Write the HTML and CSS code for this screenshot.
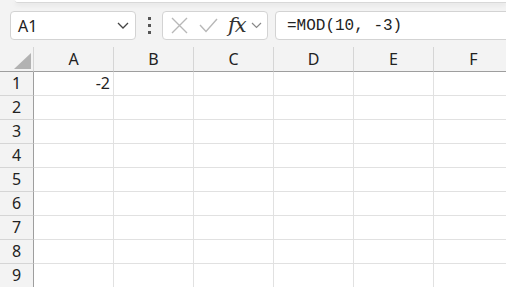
FILE: index.html
```html
<!DOCTYPE html>
<html lang="en">
<head>
    <meta charset="UTF-8">
    <title>MOD</title>
    <link rel="stylesheet" href="styles.css">
</head>
<body>
    <div class="ribbon-edge"></div>

    <div class="formula-bar">
        <div class="name-box">
            <span>A1</span>
            <svg class="chev" width="12" height="7" viewBox="0 0 12 7"><path d="M1 1 L6 6 L11 1" fill="none" stroke="#444" stroke-width="1.3"/></svg>
        </div>
        <div class="kebab"><i></i><i></i><i></i></div>
        <div class="fx-box">
            <svg width="17" height="17" viewBox="0 0 17 17"><path d="M1 1 L16 16 M16 1 L1 16" stroke="#b8b8b8" stroke-width="1.4" fill="none"/></svg>
            <svg width="19" height="15" viewBox="0 0 19 15"><path d="M1 7 L7 13.5 L18 1" stroke="#b8b8b8" stroke-width="1.4" fill="none"/></svg>
            <span class="fx">fx</span>
            <svg width="11" height="7" viewBox="0 0 11 7"><path d="M1 1 L5.5 5.5 L10 1" fill="none" stroke="#888" stroke-width="1.2"/></svg>
        </div>
        <div class="formula-input">=MOD(10, -3)</div>
    </div>

    <div class="sheet">
        <div class="corner"><span class="tri"></span></div>
        <div class="col-head">A</div>
        <div class="col-head">B</div>
        <div class="col-head">C</div>
        <div class="col-head">D</div>
        <div class="col-head">E</div>
        <div class="col-head">F</div>

        <div class="row-head">1</div>
        <div class="cell num">-2</div><div class="cell"></div><div class="cell"></div><div class="cell"></div><div class="cell"></div><div class="cell"></div>
        <div class="row-head">2</div>
        <div class="cell"></div><div class="cell"></div><div class="cell"></div><div class="cell"></div><div class="cell"></div><div class="cell"></div>
        <div class="row-head">3</div>
        <div class="cell"></div><div class="cell"></div><div class="cell"></div><div class="cell"></div><div class="cell"></div><div class="cell"></div>
        <div class="row-head">4</div>
        <div class="cell"></div><div class="cell"></div><div class="cell"></div><div class="cell"></div><div class="cell"></div><div class="cell"></div>
        <div class="row-head">5</div>
        <div class="cell"></div><div class="cell"></div><div class="cell"></div><div class="cell"></div><div class="cell"></div><div class="cell"></div>
        <div class="row-head">6</div>
        <div class="cell"></div><div class="cell"></div><div class="cell"></div><div class="cell"></div><div class="cell"></div><div class="cell"></div>
        <div class="row-head">7</div>
        <div class="cell"></div><div class="cell"></div><div class="cell"></div><div class="cell"></div><div class="cell"></div><div class="cell"></div>
        <div class="row-head">8</div>
        <div class="cell"></div><div class="cell"></div><div class="cell"></div><div class="cell"></div><div class="cell"></div><div class="cell"></div>
        <div class="row-head">9</div>
        <div class="cell"></div><div class="cell"></div><div class="cell"></div><div class="cell"></div><div class="cell"></div><div class="cell"></div>
    </div>
</body>
</html>
```

FILE: styles.css
```css
body {
    margin: 0;
    width: 506px;
    height: 287px;
    overflow: hidden;
    background-color: #f3f3f3;
    font-family: "Noto Sans", "Open Sans", sans-serif;
    color: #222;
}

.ribbon-edge {
    height: 2px;
    margin-left: 15px;
    background-color: #fff;
    border-bottom: 1px solid #d8d8d8;
    border-bottom-left-radius: 5px;
    box-shadow: 0 2px 5px rgba(0, 0, 0, 0.08);
}

.formula-bar {
    display: flex;
    align-items: center;
    padding: 8px 0 0 10px;
    height: 29px;
    margin-bottom: 7px;
}

.name-box,
.fx-box,
.formula-input {
    box-sizing: border-box;
    height: 29px;
    background-color: #fff;
    border: 1px solid #d3d3d3;
    border-radius: 4px;
    display: flex;
    align-items: center;
}

.name-box {
    width: 126px;
    padding: 0 6px 0 7px;
    justify-content: space-between;
    font-size: 16px;
}

.kebab {
    width: 26px;
    display: flex;
    flex-direction: column;
    align-items: center;
    gap: 4px;
}

.kebab i {
    width: 3px;
    height: 3px;
    background-color: #555;
}

.fx-box {
    width: 106px;
    padding: 0 3px 0 8px;
    gap: 11px;
}

.fx-box .fx {
    font-family: "DejaVu Serif", serif;
    font-style: italic;
    font-size: 21px;
    color: #333;
    margin-left: -1px;
    margin-right: -6px;
    letter-spacing: -1px;
    line-height: 1;
}

.formula-input {
    flex: 1;
    margin-left: 7px;
    margin-right: -10px;
    padding-left: 11px;
    font-family: "Liberation Mono", monospace;
    font-size: 16px;
    color: #222;
}

.sheet {
    display: grid;
    grid-template-columns: 34px repeat(6, 80px);
    grid-template-rows: 25px repeat(9, 24px);
    background-color: #fff;
}

.corner,
.col-head,
.row-head,
.cell {
    box-sizing: border-box;
}

.corner {
    background-color: #f3f3f3;
    border-right: 1px solid #d5d5d5;
    border-bottom: 1px solid #9e9e9e;
    position: relative;
}

.tri {
    position: absolute;
    right: 2px;
    bottom: 2px;
    width: 0;
    height: 0;
    border-left: 17px solid transparent;
    border-bottom: 16px solid #b2b2b2;
}

.col-head {
    background-color: #f3f3f3;
    border-right: 1px solid #d5d5d5;
    border-bottom: 1px solid #9e9e9e;
    text-align: center;
    font-size: 16px;
    line-height: 24px;
}

.row-head {
    background-color: #f3f3f3;
    border-right: 1px solid #9e9e9e;
    border-bottom: 1px solid #d5d5d5;
    text-align: center;
    font-size: 16px;
    line-height: 23px;
}

.cell {
    border-right: 1px solid #e1e1e1;
    border-bottom: 1px solid #e1e1e1;
    font-size: 16px;
    line-height: 23px;
}

.cell.num {
    text-align: right;
    padding-right: 3px;
}
```
